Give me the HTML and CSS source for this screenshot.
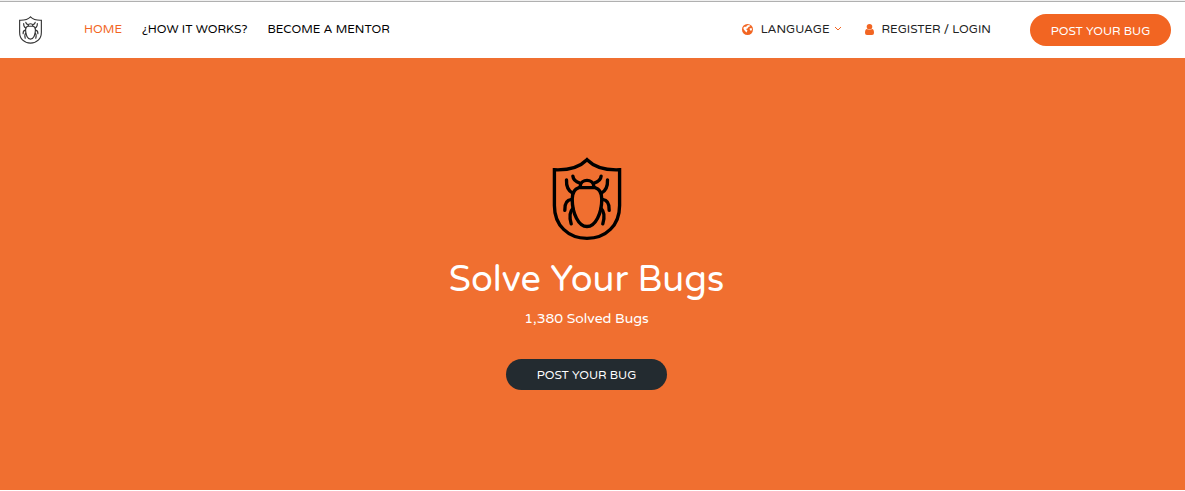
FILE: index.html
```html
<!DOCTYPE html>
<html lang="en">
<head>
<meta charset="utf-8">
<title>Solve Your Bugs</title>
<link rel="stylesheet" href="styles.css">
</head>
<body>
<svg class="sprite" aria-hidden="true">
  <symbol id="bug" viewBox="46 22 208 250">
    <g fill="none" stroke="currentColor" stroke-width="10" stroke-linecap="round">
      <path d="M150 30C130 50 96 62 53 60V166C53 226 94 264 150 264S247 226 247 166V60C204 62 170 50 150 30Z"/>
      <path d="M126 113H174C188 117 194 130 194 147C194 190 175 229 150 229S106 190 106 147C106 130 112 117 126 113Z"/>
      <path d="M130 108C132 86 168 86 170 108"/>
      <path d="M108 79C109 91 116 96 129 100M192 79C191 91 184 96 171 100"/>
      <path d="M89 90C88 110 94 123 108 130M211 90C212 110 206 123 192 130"/>
      <path d="M104 148C86 150 83 164 84 181M196 148C214 150 217 164 216 181"/>
      <path d="M108 175C95 188 98 204 103 221M192 175C205 188 202 204 197 221"/>
    </g>
  </symbol>
</svg>
<header class="header">
  <a class="brand" href="#" aria-label="Home"><svg class="brand-icon"><use href="#bug"/></svg></a>
  <nav class="nav" aria-label="Main">
    <a class="nav-link active" href="#">HOME</a>
    <a class="nav-link" href="#">¿HOW IT WORKS?</a>
    <a class="nav-link" href="#">BECOME A MENTOR</a>
  </nav>
  <div class="account">
    <button class="tool" type="button">
      <svg class="globe" viewBox="0 0 22 22"><circle cx="11" cy="11" r="11" fill="currentColor"/><path fill="#fff" d="M10 3L14 2L17 4L13 6L11 9L8 10L11 13L9 17L6 14L3 10L3 7L6 5L8 6ZM15 9L19 8L20 11L18 14L16 12Z"/></svg>
      <span>LANGUAGE</span>
      <svg class="chevron" viewBox="0 0 8 6"><path d="M1 1L4 4L7 1" fill="none" stroke="currentColor" stroke-width="1"/></svg>
    </button>
    <a class="tool" href="#">
      <svg class="user" viewBox="0 0 9 11"><circle cx="4.500" cy="2.800" r="2.800" fill="currentColor"/><path fill="currentColor" d="M2 5Q4.500 7 7 5Q9 5 9 9Q9 11 7 11H2Q0 11 0 9Q0 5 2 5Z"/></svg>
      <span>REGISTER / LOGIN</span>
    </a>
  </div>
  <button class="button button-orange" type="button">POST YOUR BUG</button>
</header>
<main class="hero">
  <svg class="hero-icon" aria-hidden="true"><use href="#bug"/></svg>
  <h1 class="title">Solve Your Bugs</h1>
  <p class="count">1,380 Solved Bugs</p>
  <button class="button button-dark" type="button">POST YOUR BUG</button>
</main>
</body>
</html>
```
FILE: styles.css
```css
* { box-sizing: border-box; }
body {
  margin: 0;
  min-height: 100vh;
  display: flex;
  flex-direction: column;
  font-family: "Varela Round", "Noto Sans", sans-serif;
  font-size: 12px;
  line-height: 18px;
  background: #fff;
  border-top: 1px solid #f0f0f0;
  border-bottom: 1px solid #fff;
}
.sprite { position: absolute; width: 0; height: 0; }
a { color: inherit; text-decoration: none; }
button { font: inherit; border: 0; padding: 0; background: none; color: inherit; cursor: pointer; }
.header {
  height: 57px;
  display: flex;
  align-items: center;
  padding: 0 14px 0 18px;
  border-top: 1px solid #b0b0b0;
  background: #fff;
  color: #000;
}
.brand { display: flex; }
.brand-icon { width: 25px; height: 28px; color: #333; }
.nav { display: flex; gap: 20px; margin-left: 41px; padding-bottom: 2px; }
.active { color: #f26522; }
.account { display: flex; gap: 23px; margin-left: auto; padding-bottom: 2px; color: #222; }
.tool { display: flex; align-items: center; }
.tool svg { color: #f26522; }
.globe { width: 11px; height: 11px; margin-right: 8px; }
.chevron { width: 8px; height: 6px; margin-left: 4px; }
.user { width: 9px; height: 11px; margin-right: 8px; }
.button { border-radius: 16px; color: #fff; }
.button-orange { width: 141px; height: 32px; padding-top: 2px; margin-left: 39px; background: #f26522; }
.hero {
  flex: 1;
  display: flex;
  flex-direction: column;
  align-items: center;
  padding: 99px 12px 99px 0;
  background: #f06f30;
  color: #fff;
}
.hero-icon { width: 70px; height: 84px; color: #000; }
.title { margin: 14px 0 0; font-size: 36px; line-height: 50px; font-weight: 400; }
.count { margin: 4px 0 0; font-size: 14px; line-height: 20px; }
.button-dark { width: 161px; height: 31px; margin-top: 30px; background: #232b30; }
```
